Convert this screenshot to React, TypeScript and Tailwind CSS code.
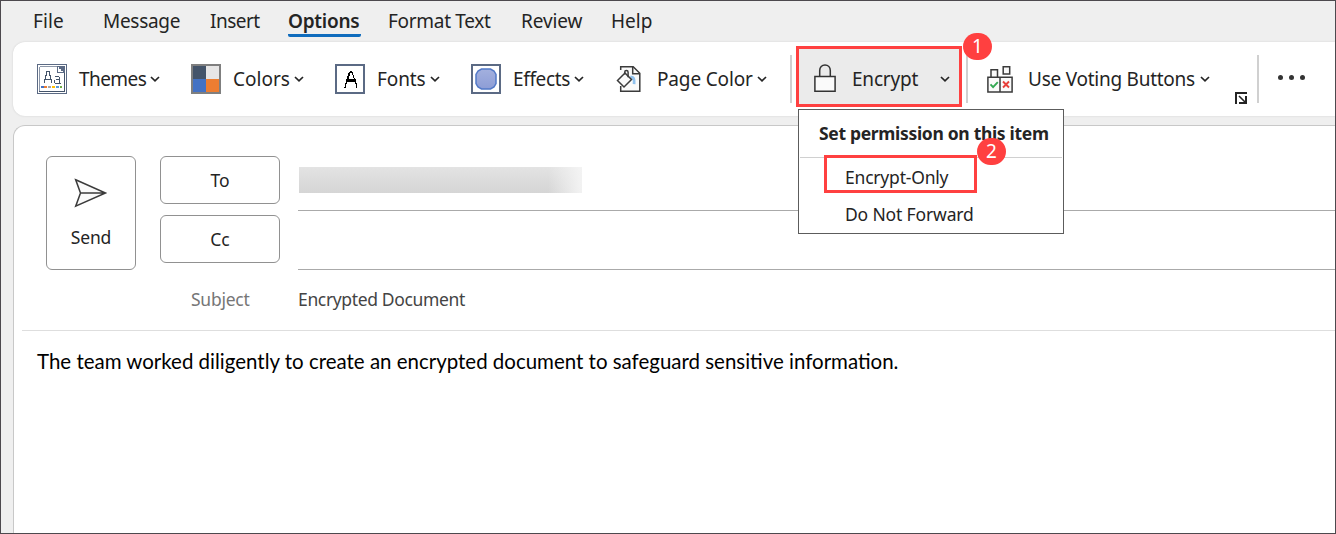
import type { ReactNode } from "react";

function Chevron() {
  return (
    <svg className="shrink-0" width="10" height="8" viewBox="0 0 10 8" fill="none" stroke="#242424" strokeWidth="1.7">
      <path d="M1 2l4 3.9L9 2" />
    </svg>
  );
}

function ThemesIcon() {
  return (
    <svg width="30" height="30" viewBox="0 0 30 30" fill="none" shapeRendering="crispEdges">
      <path d="M.5.5h29v29H.5z" stroke="#5b6a84" />
      <path d="M2.5 2.5h18M2.5 2.5v25" stroke="#8d97a8" />
      <path d="M2 27.5h26M27.5 8v20" stroke="#44546a" />
      <path d="M20.500 2v6.500H27" stroke="#5b6a84" fill="#fff" />
      <path d="M21 2h7v7h-2V7h-2V5h-2V3h-1z" fill="#5b6a84" />
      <path d="M7.5 19v-3l1-1v-3l1-1V8l1-1h1l1 1v3l1 1v3l1 1v3M8 15.500h5" stroke="#44546a" />
      <path d="M18 12.500h4M22.500 13v6h1M22 15.500h-3M17.500 16v3M18 19.500h4" stroke="#44546a" />
      <path d="M4 23h3" stroke="#4472c4" strokeWidth="2" />
      <path d="M7 23h3" stroke="#ed7d31" strokeWidth="2" />
      <path d="M11 23h3" stroke="#a5a5a5" strokeWidth="2" />
      <path d="M15 23h3" stroke="#ffc000" strokeWidth="2" />
      <path d="M19 23h3" stroke="#5b9bd5" strokeWidth="2" />
      <path d="M23 23h2" stroke="#70ad47" strokeWidth="2" />
    </svg>
  );
}

function ColorsIcon() {
  return (
    <svg width="30" height="30" viewBox="0 0 30 30" shapeRendering="crispEdges">
      <path fill="#7f7f7f" d="M0 0h30v30H0z" />
      <path fill="#44546a" d="M2 2h13v13H2z" />
      <path fill="#e7e6e6" d="M15 2h13v13H15z" />
      <path fill="#4472c4" d="M2 15h13v13H2z" />
      <path fill="#ed7d31" d="M15 15h13v13H15z" />
    </svg>
  );
}

function FontsIcon() {
  return (
    <svg width="30" height="30" viewBox="0 0 30 30" fill="none" shapeRendering="crispEdges">
      <path d="M1 1h28v28H1z" fill="#fff" stroke="#5b6a84" strokeWidth="2" />
      <path
        fill="#000"
        d="M15 7h2v1h1v3h1v3h1v1h1v4h1v5h-1v-4h-1v-2h-8v2h-1v4h-2v-1h1v-4h1v-4h1v-3h1v-3h1V8h1zM15 9v3h-1v3h5v-1h-1v-3h-1V9z"
        fillRule="evenodd"
      />
    </svg>
  );
}

function EffectsIcon() {
  return (
    <svg width="30" height="30" viewBox="0 0 30 30">
      <defs>
        <linearGradient id="orb" x1="0" y1="0" x2="0" y2="1">
          <stop offset="0" stopColor="#a3b0de" />
          <stop offset="1" stopColor="#8d9dd6" />
        </linearGradient>
      </defs>
      <path d="M1 1h28v28H1z" fill="#fff" stroke="#5b6a84" strokeWidth="2" shapeRendering="crispEdges" />
      <path
        d="M10.500 5h9l3.500 2 2 3.500v9L23 23l-3.500 2h-9L7 23l-2-3.500v-9L7 7z"
        fill="url(#orb)"
        stroke="#5279c7"
        strokeWidth="1.500"
      />
    </svg>
  );
}

function PageColorIcon() {
  return (
    <svg width="26" height="30" viewBox="0 0 26 30" fill="none" stroke="#3b3b3b" strokeWidth="1.500">
      <path d="M4.700 6V2.700h12.500l6.600 6.600V27.300H4.700V22" fill="#fafafa" />
      <path d="M16.700 3v6.800h7" />
      <path d="M14.500 13.200c3-.8 4.100 1.700 3.600 7" stroke="#8fc1ee" strokeWidth="2.800" />
      <path d="M1.500 16.500L9 9l6.500 6.500-7.500 7.500z" fill="#fafafa" />
      <path d="M8.700 10.500V8.300a1.700 1.700 0 0 1 3.400 0v5" />
    </svg>
  );
}

function LockIcon() {
  return (
    <svg width="22" height="29" viewBox="0 0 22 29" fill="none" stroke="#333" strokeWidth="1.500">
      <path d="M5.700 12V6.500c0-3.300 2.200-5.500 5.300-5.500s5.300 2.200 5.300 5.500V12" />
      <path d="M.9 12.500h20.200v14.800H.9z" fill="#fafafa" />
    </svg>
  );
}

function VotingIcon() {
  return (
    <svg width="26" height="29" viewBox="0 0 26 29" fill="none" stroke="#3b3b3b" strokeWidth="1.500">
      <path d="M4 12V4.700h6.500V12M16.200 1.700h6.500V9h-6.500z" fill="#fafafa" />
      <path d="M.9 12.200h24.200v14.900H.9zM13 12.200v14.900" fill="#fafafa" />
      <path d="M3.500 19.300l2.600 2.800 4.700-5" stroke="#33a852" strokeWidth="1.900" />
      <path d="M16 16.500l6 6M22 16.500l-6 6" stroke="#e8403a" strokeWidth="1.900" />
    </svg>
  );
}

function SendIcon() {
  return (
    <svg width="34" height="30" viewBox="0 0 34 30" fill="#fafafa" stroke="#3b3b3b" strokeWidth="1.500">
      <path d="M1.700 1.800L31.500 15 1.700 28.200 6.500 15zM6.500 15h25" />
    </svg>
  );
}

function LauncherIcon() {
  return (
    <svg width="12" height="12" viewBox="0 0 12 12" fill="none" stroke="#242424" shapeRendering="crispEdges">
      <path d="M.75 12V.75H12" strokeWidth="1.500" />
      <path d="M4 4l6 6" strokeWidth="1.600" shapeRendering="auto" />
      <path d="M11 4v7H4" strokeWidth="2" />
    </svg>
  );
}

function Command({ icon, label, box, text }: { icon: ReactNode; label: string; box: string; text: string }) {
  return (
    <div className={`flex shrink-0 items-center ${box}`}>
      {icon}
      <span className={`shrink-0 ${text}`}>{label}</span>
      <Chevron />
    </div>
  );
}

function Badge({ n, place }: { n: number; place: string }) {
  return (
    <div
      className={`absolute z-20 flex h-[27px] w-[29px] items-center justify-center rounded-full bg-[#ff4040] text-[19px] leading-none text-white ${place}`}
    >
      {n}
    </div>
  );
}

export default function App() {
  return (
    <div className="relative flex h-[534px] w-[1336px] flex-col overflow-hidden border border-[#4d494e] bg-[#efefef] font-['Noto_Sans',sans-serif] whitespace-nowrap text-[#242424]">
      <nav className="flex h-[41px] shrink-0 pt-[7px] pl-8 text-[19px] leading-[26px]">
        <span className="w-[70px] tracking-[0.1px]">File</span>
        <span className="w-[107px] tracking-[-0.3px]">Message</span>
        <span className="w-[78px] tracking-[-0.5px]">Insert</span>
        <span className="mr-[27px] h-[29px] w-[73px] rounded-b-[2px] border-b-[3px] border-[#0f6cbd] font-semibold tracking-[-0.25px]">
          Options
        </span>
        <span className="w-[133px] tracking-[-0.3px]">Format Text</span>
        <span className="w-[90px] tracking-[-0.1px]">Review</span>
        <span>Help</span>
      </nav>

      <div className="ml-3 flex h-[74px] shrink-0 items-center rounded-l-[12px] bg-white pl-6 text-[19px] leading-[26px] shadow-[0_0_2px_#ccc]">
        <Command icon={<ThemesIcon />} label="Themes" box="w-[154px]" text="pl-3 w-[83px] tracking-[-0.55px]" />
        <Command icon={<ColorsIcon />} label="Colors" box="w-[144px]" text="pl-3 w-[73px]" />
        <Command icon={<FontsIcon />} label="Fonts" box="w-[136px]" text="pl-3 w-[65px] tracking-[-0.1px]" />
        <Command icon={<EffectsIcon />} label="Effects" box="w-[145px]" text="pl-3 w-[73px] tracking-[-0.35px]" />
        <Command icon={<PageColorIcon />} label="Page Color" box="w-[174px]" text="pl-[15px] w-[115px] tracking-[-0.15px]" />
        <div className="h-12 w-[2px] shrink-0 bg-[#d0d0d0]" />
        <div className="mb-[5px] ml-1 flex h-[61px] w-[166px] shrink-0 items-center border-[3px] border-[#ff4040] bg-[#ebebeb] pt-[4px] pl-[15px]">
          <LockIcon />
          <span className="w-[104px] pl-4 tracking-[-0.2px]">Encrypt</span>
          <Chevron />
        </div>
        <div className="ml-1 h-12 w-[2px] shrink-0 bg-[#d0d0d0]" />
        <div className="ml-[19px] flex w-[224px] shrink-0 items-center">
          <VotingIcon />
          <span className="w-[187px] shrink-0 pl-[15px] tracking-[-0.25px]">Use Voting Buttons</span>
          <Chevron />
        </div>
        <div className="mt-[38px] ml-6 shrink-0">
          <LauncherIcon />
        </div>
        <div className="ml-[10px] h-12 w-[2px] shrink-0 bg-[#d0d0d0]" />
        <div className="mb-1 ml-[19px] flex gap-[6px]">
          <i className="size-[5px] rounded-full bg-[#333]" />
          <i className="size-[5px] rounded-full bg-[#333]" />
          <i className="size-[5px] rounded-full bg-[#333]" />
        </div>
      </div>

      <main className="mt-[9px] -mr-px ml-3 flex flex-1 flex-col rounded-tl-[12px] border-t border-l border-[#c8c8c8] bg-white text-[17.5px] leading-6">
        <div className="flex pt-[30px] pl-8">
          <div className="flex h-[114px] w-[90px] shrink-0 flex-col items-center rounded-md border border-[#919191] pt-[21px]">
            <SendIcon />
            <span className="mt-[17px] tracking-[-0.2px]">Send</span>
          </div>
          <div className="ml-6 flex w-[120px] shrink-0 flex-col gap-[11px]">
            <div className="flex h-12 items-center justify-center rounded-md border border-[#919191]">To</div>
            <div className="flex h-12 items-center justify-center rounded-md border border-[#919191]">Cc</div>
          </div>
          <div className="ml-[18px] flex-1">
            <div className="h-[55px] border-b border-[#aaa] pt-[11px] pl-px">
              <div className="h-[26px] w-[283px] bg-[linear-gradient(90deg,transparent_0_88%,#f5f5f5e0_99%),linear-gradient(180deg,#e3e3e3,#d5d5d5)]" />
            </div>
            <div className="h-[59px] border-b border-[#aaa]" />
          </div>
        </div>
        <div className="ml-2 flex h-[61px] items-center border-b border-[#dedede] pb-[2px] pl-[169px]">
          <span className="w-[107px] tracking-[-0.25px] text-[#767676]">Subject</span>
          <span className="tracking-[-0.35px] text-[#444]">Encrypted Document</span>
        </div>
        <p className="pt-4 pl-[23px] font-['Lato',sans-serif] text-[20.48px] leading-[28px] text-black">
          The team worked diligently to create an encrypted document to safeguard sensitive information.
        </p>
      </main>

      <div className="absolute top-[108px] left-[797px] z-10 h-[125px] w-[266px] border border-[#5c5c5c] bg-white text-[17.5px] leading-6">
        <div className="mx-px flex h-12 items-center border-b border-[#d0d0d0] pb-px pl-[19px] font-bold tracking-[-0.32px]">
          Set permission on this item
        </div>
        <div className="pt-[7px] pl-[46px] tracking-[-0.2px]">Encrypt-Only</div>
        <div className="pt-[13px] pl-[46px] tracking-[-0.15px]">Do Not Forward</div>
        <div className="absolute top-[45px] left-[25px] h-[38px] w-[153px] border-[3px] border-[#ff4040]" />
      </div>
      <Badge n={1} place="top-[32px] left-[962px]" />
      <Badge n={2} place="top-[137px] left-[976px]" />
    </div>
  );
}
